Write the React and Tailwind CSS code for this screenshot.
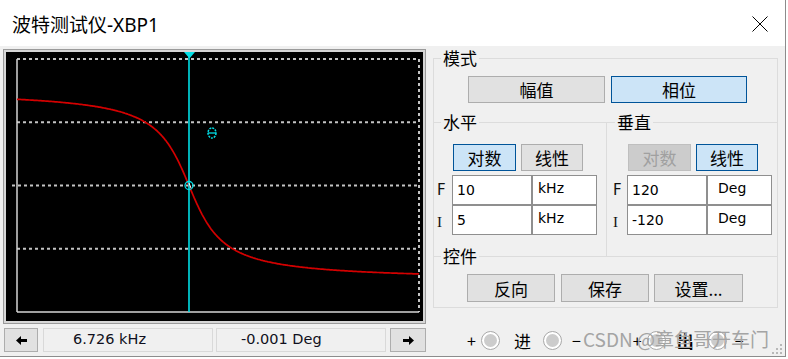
import React from 'react';
import clsx from 'clsx';

const cjk = "font-['Noto_Sans_CJK_SC',sans-serif]";
const dv = "font-['DejaVu_Sans',sans-serif]";
const cyan = '#00dfe6';

// phase curve of the band-pass, log axis 5 kHz .. 10 kHz
const F0 = 6.726;
const curve = [];
for (let x = 11; x <= 413; x++) {
  const f = 5 * Math.pow(2, (x - 11) / 402);
  const r = f / F0;
  const ph = (-Math.atan(11.5 * (r - 1 / r)) * 180) / Math.PI;
  curve.push(`${x},${(133.5 - ph * (253 / 240)).toFixed(1)}`);
}

function Btn({ children, className, kind = 'normal' }) {
  const styles = {
    normal: 'bg-[#e1e1e1] border-[#adadad] text-black',
    on: 'bg-[#cce4f7] border-[#005499] text-black',
    off: 'bg-[#cccccc] border-[#bfbfbf] text-[#a0a0a0]',
  };
  return (
    <button className={clsx('border flex items-center justify-center text-[17px] leading-none', cjk, styles[kind], className)}>
      {children}
    </button>
  );
}

function Legend({ children, className }) {
  return (
    <div className={clsx('-mt-[10px] h-[18px] leading-[18px] px-[2px] bg-[#f0f0f0] self-start text-[17px] text-black', cjk, className)}>
      {children}
    </div>
  );
}

function Cell({ children, className }) {
  return (
    <div className={clsx('h-full border border-[#8f8f8f] bg-white flex items-center text-[14px] text-black', dv, className)}>
      {children}
    </div>
  );
}

function InputGrid({ label, rows, unitPad, valPad }) {
  return (
    <div className="flex mt-[4px]">
      <div className={clsx('flex flex-col', label)}>
        <div className={clsx('h-[30px] flex items-center text-[15px] text-[#111]', dv)}>F</div>
        <div className="h-[30px] flex items-end pb-[2px] text-[15px] text-[#111] font-['Liberation_Serif',serif]">I</div>
      </div>
      <div className="flex flex-col">
        {rows.map(([v, u]) => (
          <div key={v} className="flex h-[30px]">
            <Cell className={clsx('w-[80px]', valPad)}>{v}</Cell>
            <Cell className={clsx('w-[65px] pb-[3px]', unitPad)}>{u}</Cell>
          </div>
        ))}
      </div>
    </div>
  );
}

function Arrow({ left }) {
  return (
    <svg width="11" height="9" viewBox="0 0 11 9" className={left ? '' : 'rotate-180'}>
      <polygon points="0,4.5 5,0 5,9" fill="#000" />
      <rect x="4.5" y="3" width="6.5" height="3" fill="#000" />
    </svg>
  );
}

function Radio() {
  return (
    <div className="w-[19px] h-[19px] rounded-full border border-[#a8a8a8] bg-white p-[2px]">
      <div className="w-full h-full rounded-full bg-[#cccccc]" />
    </div>
  );
}

export default function App() {
  const dash = { stroke: '#c4c4c4', strokeWidth: 2, strokeDasharray: '3 3' };
  return (
    <div className="w-[788px] h-[359px] bg-white overflow-hidden">
      <div className="relative w-[786px] h-[357px] border-r border-b border-[#8c8c8c] flex flex-col">
        {/* title bar */}
        <div className="h-[46px] shrink-0 bg-white flex items-center justify-between pl-[12px] pr-[17px] pt-[4px]">
          <span className={clsx('text-[19px] text-black', "font-['Noto_Sans','Noto_Sans_CJK_SC',sans-serif]")}>波特测试仪-XBP1</span>
          <svg width="16" height="16" viewBox="0 0 16 16" className="-mt-[2px]">
            <path d="M0.5 0.5 L15.5 15.5 M15.5 0.5 L0.5 15.5" stroke="#000" strokeWidth="1" fill="none" />
          </svg>
        </div>

        <div className="flex-1 bg-[#f0f0f0] flex">
          {/* left: plot */}
          <div className="pl-[3px] pt-[3px] flex flex-col">
            <div className="w-[423px] h-[275px] border border-[#9a9a9a] bg-[#d6d6d6] p-[2px]">
              <div className="w-full h-full bg-black">
                <svg width="417" height="269" className="block">
                  {[7, 70.25, 196.75].map((y) => (
                    <line key={y} x1={11} x2={413} y1={y} y2={y} {...dash} />
                  ))}
                  <line x1={6} x2={413} y1={133.5} y2={133.5} {...dash} />
                  <line x1={413} x2={413} y1={7} y2={260} {...dash} />
                  <line x1={11} x2={11} y1={7} y2={260} stroke="#d4d4d4" strokeWidth="1.5" />
                  <line x1={11} x2={413} y1={260} y2={260} stroke="#d4d4d4" strokeWidth="1.5" />
                  <polyline points={curve.join(' ')} fill="none" stroke="#d40000" strokeWidth="1.7" />
                  <line x1={183} x2={183} y1={0} y2={260} stroke={cyan} strokeWidth="1.6" />
                  <polygon points="178,0 189,0 183.5,6.5" fill={cyan} />
                  <circle cx={183} cy={133.5} r={4} fill="none" stroke={cyan} strokeWidth="1.3" />
                  <line x1={183} x2={185} y1={131} y2={136} stroke="#ffffff" strokeWidth="1" />
                  <ellipse cx={206} cy={81} rx={4} ry={5} fill="none" stroke={cyan} strokeWidth="1.5" strokeDasharray="2 1" />
                  <line x1={202} x2={210} y1={81} y2={81} stroke={cyan} strokeWidth="1.3" />
                </svg>
              </div>
            </div>
            {/* cursor readout */}
            <div className="flex items-stretch mt-[4px] h-[24px]">
              <button className="ml-[1px] w-[34px] bg-[#e1e1e1] border border-[#adadad] flex items-center justify-center">
                <Arrow left />
              </button>
              <div className={clsx('ml-[5px] w-[170px] border border-[#d9d9d9] flex items-center pl-[29px] text-[14.5px] text-[#101020]', dv)}>6.726 kHz</div>
              <div className={clsx('ml-[3px] w-[170px] border border-[#d9d9d9] flex items-center pl-[24px] text-[14.5px] text-[#101020]', dv)}>-0.001 Deg</div>
              <button className="ml-[4px] w-[36px] bg-[#e1e1e1] border border-[#adadad] flex items-center justify-center">
                <Arrow />
              </button>
            </div>
          </div>

          {/* right: controls */}
          <div className="ml-[7px] mt-[12px] w-[345px] flex flex-col">
            <div className="h-[64px] border-t border-x border-[#dcdcdc] flex flex-col">
              <Legend className="ml-[7px]">模式</Legend>
              <div className="flex gap-[6px] ml-[34px] mt-[9px]">
                <Btn className="w-[137px] h-[27px]">幅值</Btn>
                <Btn className="w-[136px] h-[27px]" kind="on">相位</Btn>
              </div>
            </div>

            <div className="flex h-[134px]">
              <div className="w-[174px] border-t border-x border-[#dcdcdc] flex flex-col">
                <Legend className="ml-[7px]">水平</Legend>
                <div className="flex gap-[5px] ml-[19px] mt-[13px]">
                  <Btn className="w-[63px] h-[27px]" kind="on">对数</Btn>
                  <Btn className="w-[62px] h-[27px]">线性</Btn>
                </div>
                <InputGrid
                  label="w-[18px] pl-[3px]"
                  rows={[['10', 'kHz'], ['5', 'kHz']]}
                  valPad="pl-[4px]"
                  unitPad="pl-[5px]"
                />
              </div>
              <div className="w-[171px] border-t border-r border-[#dcdcdc] flex flex-col">
                <Legend className="ml-[8px]">垂直</Legend>
                <div className="flex gap-[5px] ml-[21px] mt-[13px]">
                  <Btn className="w-[63px] h-[27px]" kind="off">对数</Btn>
                  <Btn className="w-[62px] h-[27px]" kind="on">线性</Btn>
                </div>
                <InputGrid
                  label="w-[20px] pl-[6px]"
                  rows={[['120', 'Deg'], ['-120', 'Deg']]}
                  valPad="pl-[4px]"
                  unitPad="pl-[10px]"
                />
              </div>
            </div>

            <div className="h-[52px] border border-[#dcdcdc] flex flex-col">
              <Legend className="ml-[7px]">控件</Legend>
              <div className="flex ml-[33px] mt-[9px]">
                <Btn className="w-[88px] h-[28px]">反向</Btn>
                <Btn className="w-[88px] h-[28px] ml-[6px]">保存</Btn>
                <Btn className="w-[89px] h-[28px] ml-[5px]">设置...</Btn>
              </div>
            </div>

            {/* trigger edge radios, with the watermark over them */}
            <div className={clsx('relative flex items-center h-[20px] mt-[22px] text-black', cjk)}>
              <span className="ml-[34px] text-[16px] leading-none">+</span>
              <div className="ml-[5px]"><Radio /></div>
              <span className="ml-[14px] text-[17px] leading-none">进</span>
              <div className="ml-[12px]"><Radio /></div>
              <span className="ml-[10px] text-[16px] leading-none">−</span>
              <span className="ml-[52px] text-[16px] leading-none">+</span>
              <div className="ml-[5px]"><Radio /></div>
              <span className="ml-[11px] text-[17px] leading-none font-bold">出</span>
              <div className="ml-[14px]"><Radio /></div>
              <span className="ml-[8px] text-[16px] leading-none">−</span>
              <span className="absolute left-[150px] top-[-3px] text-[19px] leading-[24px] text-[#a4a4a4] whitespace-nowrap">
                CSDN @章鱼哥开车门
              </span>
            </div>
          </div>
        </div>

        {/* size grip */}
        <svg width="12" height="12" viewBox="0 0 12 12" className="absolute right-[2px] bottom-[1px]">
          {[[10, 2], [10, 6], [6, 6], [10, 10], [6, 10], [2, 10]].map(([x, y]) => (
            <rect key={`${x}-${y}`} x={x - 1} y={y - 1} width="2" height="2" fill="#b8b8b8" />
          ))}
        </svg>
      </div>
    </div>
  );
}
